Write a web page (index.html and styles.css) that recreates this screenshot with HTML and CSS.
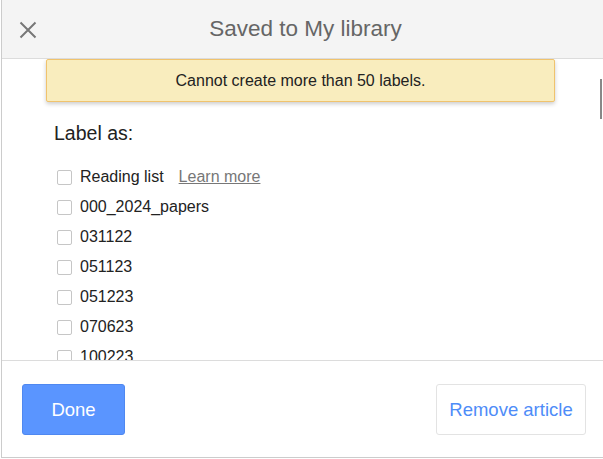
FILE: index.html
```
<!DOCTYPE html>
<html>
<head>
<meta charset="utf-8">
<link rel="stylesheet" href="styles.css">
</head>
<body>
<div class="dialog">
  <header class="head">
    <button class="close" aria-label="Close">
      <svg width="18" height="18" viewBox="0 0 18 18"><path d="M1.5 1.5 L16.5 16.5 M16.5 1.5 L1.5 16.5" stroke="#777" stroke-width="2" fill="none"/></svg>
    </button>
    <h1 class="title">Saved to My library</h1>
  </header>
  <div class="body">
    <div class="notice">Cannot create more than 50 labels.</div>
    <div class="scroll">
      <h2 class="label-as">Label as:</h2>
      <ul class="list">
        <li class="row"><span class="box"></span><span class="name">Reading list</span><a class="learn" href="#">Learn more</a></li>
        <li class="row"><span class="box"></span><span class="name">000_2024_papers</span></li>
        <li class="row"><span class="box"></span><span class="name">031122</span></li>
        <li class="row"><span class="box"></span><span class="name">051123</span></li>
        <li class="row"><span class="box"></span><span class="name">051223</span></li>
        <li class="row"><span class="box"></span><span class="name">070623</span></li>
        <li class="row"><span class="box"></span><span class="name">100223</span></li>
        <li class="row"><span class="box"></span><span class="name">110123</span></li>
      </ul>
    </div>
    <div class="thumb"></div>
  </div>
  <footer class="foot">
    <button class="btn primary">Done</button>
    <button class="btn secondary">Remove article</button>
  </footer>
</div>
</body>
</html>
```
FILE: styles.css
```
html, body {
  margin: 0;
  padding: 0;
  background: #fff;
}
body {
  font-family: Arial, "Liberation Sans", sans-serif;
  color: #222;
}
.dialog {
  margin-left: 1px;
  width: 602px;
  height: 458px;
  border-left: 1px solid #ccc;
  border-bottom: 1px solid #ccc;
  display: flex;
  flex-direction: column;
  box-sizing: border-box;
}
.head {
  height: 59px;
  flex: none;
  background: #f4f4f4;
  border-bottom: 1px solid #dcdcdc;
  box-sizing: border-box;
  display: flex;
  align-items: center;
  position: relative;
}
.close {
  border: 0;
  background: transparent;
  padding: 0;
  margin-left: 17px;
  margin-top: 1px;
  width: 18px;
  height: 18px;
  display: flex;
}
.title {
  margin: 0;
  position: absolute;
  left: 0;
  right: 0;
  text-align: center;
  font-weight: normal;
  font-size: 22.5px;
  color: #666;
  padding-left: 6px;
  pointer-events: none;
}
.body {
  flex: 1;
  position: relative;
  overflow: hidden;
  border-bottom: 1px solid #dcdcdc;
}
.notice {
  position: absolute;
  top: 0;
  left: 44px;
  width: 509px;
  height: 43px;
  box-sizing: border-box;
  background: #f9edbe;
  border: 1px solid #f0c36d;
  border-radius: 2px;
  box-shadow: 0 2px 4px rgba(0,0,0,0.2);
  font-size: 16px;
  color: #222;
  display: flex;
  align-items: center;
  justify-content: center;
  z-index: 2;
}
.scroll {
  padding: 62px 0 0 52px;
}
.label-as {
  margin: 0 0 17px 0;
  font-weight: normal;
  font-size: 19.5px;
  color: #222;
  line-height: 24px;
}
.list {
  list-style: none;
  margin: 0;
  padding: 0;
}
.row {
  height: 30px;
  display: flex;
  align-items: center;
  font-size: 16px;
  color: #222;
}
.box {
  width: 15px;
  height: 15px;
  box-sizing: border-box;
  border: 1px solid #c6c6c6;
  border-radius: 2px;
  margin-left: 3px;
  margin-right: 8px;
  background: #fff;
}
.learn {
  margin-left: 15px;
  color: #777;
  text-decoration: underline;
}
.thumb {
  position: absolute;
  right: 1px;
  top: 20px;
  width: 2px;
  height: 40px;
  background: #888;
}
.foot {
  flex: none;
  height: 96px;
  display: flex;
  justify-content: space-between;
  align-items: flex-start;
  padding: 23px 17px 0 20px;
  box-sizing: border-box;
}
.btn {
  height: 51px;
  font-family: Arial, "Liberation Sans", sans-serif;
  font-size: 18.5px;
  border-radius: 3px;
  cursor: pointer;
}
.primary {
  width: 103px;
  background: #5a95ff;
  border: 1px solid #4f88f0;
  color: #fff;
}
.secondary {
  width: 150px;
  background: #fff;
  border: 1px solid #e3e3e3;
  color: #4e8cf8;
}
```
